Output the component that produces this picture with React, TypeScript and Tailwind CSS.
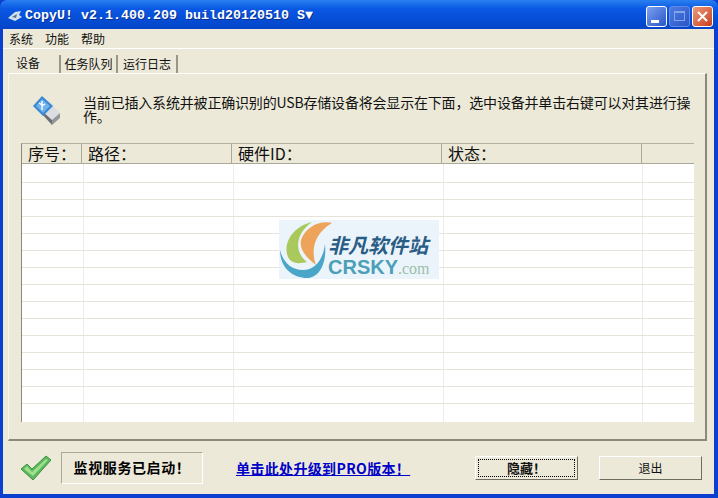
const rows = Array.from({ length: 15 }, (_, i) => i);
const headCols = "grid grid-cols-[60px_150px_210px_200px_1fr]";
const bodyCols = "grid grid-cols-[62px_150px_210px_199px_1fr]";

function Usb() {
  return (
    <svg width="32" height="32" viewBox="0 0 32 32">
      <path d="M10 14 L21 25 L29 18 L18 7 Z" fill="#dcdde0" />
      <path d="M10 15 L10 18 L21 30 L21 25 Z" fill="#6d6f75" />
      <path d="M21 25 L21 30 L29 23 L29 18 Z" fill="#94969c" />
      <path d="M2 11 L11 1 L22 11 L12 21 Z" fill="#3a88d4" />
      <path d="M5 11 L11 4 L19 11 L12 18 Z" fill="#6fb2ec" />
      <path d="M11 6 V15 M11 10 L8 8 M11 11 L14 9" stroke="#fff" strokeWidth="1.4" fill="none" />
    </svg>
  );
}

function Check() {
  return (
    <svg width="32" height="26" viewBox="0 0 32 26">
      <path d="M1 14 L7 9 L12 14 L26 1 L31 5 L13 25 Z" fill="#5cb85a" stroke="#3f8f48" strokeWidth="1" />
      <path d="M4 14 L7 11 L12 17 L26 4 L28 5 L13 21 Z" fill="#9fe08f" />
    </svg>
  );
}

function Logo() {
  return (
    <div className="absolute left-[279px] top-[220px] w-[160px] h-[59px] bg-[#ecf4fb] flex items-center overflow-hidden">
      <svg width="54" height="59" viewBox="0 0 54 59" className="shrink-0">
        <path d="M1 30 C1 48 14 58 28 58 C40 58 48 44 46 24 C44 40 36 50 24 50 C12 50 4 42 1 30 Z" fill="#4aa6c8" />
        <path d="M33 2 C16 6 5 20 8 34 C10 42 16 45 28 42 C15 32 16 14 33 2 Z" fill="#a9c95c" />
        <path d="M53 3 C40 0 26 8 22 20 C20 30 28 38 37 45 C32 32 34 14 53 3 Z" fill="#eda35a" />
      </svg>
      <div className="flex flex-col -ml-[5px] pt-[11px]">
        <span className="text-[20px] leading-[25px] font-bold italic text-[#2a5d86] whitespace-nowrap font-['Noto_Sans_CJK_SC',sans-serif]">非凡软件站</span>
        <span className="leading-[20px] whitespace-nowrap">
          <span className="text-[20px] font-bold text-[#4b9fb8] font-['Liberation_Sans',sans-serif]">CRSKY</span>
          <span className="text-[16px] text-[#9cc0a8] font-['Liberation_Serif',serif]">.com</span>
        </span>
      </div>
    </div>
  );
}

export default function App() {
  return (
    <div className="relative w-[718px] h-[498px] overflow-hidden flex flex-col bg-[#0a3fd0] font-['Noto_Sans_CJK_SC',sans-serif] text-[#111]">
      <div className="h-[29px] shrink-0 flex items-center pt-[3px] pl-[7px] pr-[5px] rounded-t-[7px] bg-gradient-to-b from-[#2a80f0] via-[#0a58e4] via-30% to-[#0344c8]">
        <svg width="16" height="14" viewBox="0 0 16 14" className="mr-[2px]">
          <path d="M1 9 L8 3 L14 2 L12 6 L15 8 L8 12 Z" fill="#cfe0ee" />
          <path d="M5 8 L10 5 L9 9 Z" fill="#56708c" />
        </svg>
        <span className="text-white font-bold text-[13.33px] leading-none font-['Liberation_Mono',monospace] whitespace-nowrap [text-shadow:1px_1px_0_#0a2f90]">CopyU! v2.1.400.209 build20120510 S▼</span>
        <div className="ml-auto flex gap-[2px]">
          <div className="w-[21px] h-[21px] rounded-[3px] border border-white bg-gradient-to-br from-[#7c9ff0] to-[#2a55c8] flex items-end pl-[4px] pb-[3px]">
            <div className="w-[8px] h-[3px] bg-white" />
          </div>
          <div className="w-[21px] h-[21px] rounded-[3px] border border-[#5f8ae8] bg-gradient-to-br from-[#4f7ce0] to-[#2a55c8] flex items-center justify-center">
            <div className="w-[11px] h-[10px] border border-[#84a4ea] border-t-2" />
          </div>
          <div className="w-[21px] h-[21px] rounded-[3px] border border-white bg-gradient-to-br from-[#eb9a7c] to-[#c83c18] flex items-center justify-center">
            <svg width="13" height="13" viewBox="0 0 13 13">
              <path d="M2 2 L11 11 M11 2 L2 11" stroke="#fff" strokeWidth="2" />
            </svg>
          </div>
        </div>
      </div>

      <div className="flex-1 min-h-0 mx-[3px] mb-[4px] mr-[4px] bg-[#ece9d8] flex flex-col">
        <div className="h-[19px] shrink-0 flex items-center gap-[12px] pl-[6px] text-[12px] leading-none border-b border-white box-content">
          <span>系统</span>
          <span>功能</span>
          <span>帮助</span>
        </div>

        <div className="h-[24px] shrink-0 flex items-end pl-[5px] text-[12px] leading-none">
          <div className="w-[51px] h-[24px] flex items-center pl-[8px] pt-[3px] text-[12px]">设备</div>
          <div className="h-[18px] w-[59px] flex items-center justify-center border-r-2 border-l-2 border-l-[#9a9788] border-r-[#9a9788] box-border">任务队列</div>
          <div className="h-[18px] w-[60px] flex items-center justify-center border-r-2 border-r-[#9a9788]">运行日志</div>
        </div>

        <div className="ml-[5px] mr-[7px] h-[368px] shrink-0 border-t border-t-white border-l border-l-[#f7f5ec] border-r-2 border-r-[#8c897c] border-b-2 border-b-[#8c897c] flex flex-col pl-[12px] pr-[12px]">
          <div className="h-[69px] shrink-0 flex pt-[21px]">
            <div className="w-[62px] shrink-0 pl-[10px]">
              <Usb />
            </div>
            <p className="w-[612px] shrink-0 text-[14px] leading-[14px] tracking-[-0.18px] m-0">
              当前已插入系统并被正确识别的USB存储设备将会显示在下面，选中设备并单击右键可以对其进行操作。
            </p>
          </div>
          <div className="h-[279px] w-[673px] border-l border-l-[#8c897c] border-t border-t-[#b5b2a2] bg-white flex flex-col">
            <div className={`${headCols} h-[20px] shrink-0 bg-[#ece9d8] border-b border-[#aca899] text-[16px] leading-[18px]`}>
              <div className="pl-[6px] border-r border-[#aca899]">序号：</div>
              <div className="pl-[6px] border-r border-[#aca899]">路径：</div>
              <div className="pl-[6px] border-r border-[#aca899]">硬件ID：</div>
              <div className="pl-[6px] border-r border-[#aca899]">状态：</div>
              <div />
            </div>
            <div className="flex-1 min-h-0 flex flex-col">
              {rows.map((r) => (
                <div
                  key={r}
                  className={`${bodyCols} ${r === 0 ? "h-[19px]" : r === 14 ? "flex-1" : "h-[17px] border-b border-[#e6e4da]"} ${r === 0 ? "border-b border-[#e6e4da]" : ""} shrink-0`}
                >
                  <div className="border-r border-[#eeece4]" />
                  <div className="border-r border-[#eeece4]" />
                  <div className="border-r border-[#eeece4]" />
                  <div className="border-r border-[#eeece4]" />
                  <div />
                </div>
              ))}
            </div>
          </div>
        </div>

        <div className="flex-1 min-h-0 flex items-center pl-[17px] pr-[12px]">
          <div className="w-[32px] shrink-0 flex"><Check /></div>
          <div className="ml-[9px] w-[142px] h-[32px] shrink-0 border border-t-[#aca899] border-l-[#aca899] border-r-white border-b-white flex items-center justify-center text-[14px] font-bold tracking-[0.6px] text-black">
            监视服务已启动！
          </div>
          <a className="ml-[33px] text-[14px] font-bold text-[#0000c8] underline whitespace-nowrap leading-none tracking-[0.35px]">单击此处升级到PRO版本！</a>
          <button className="ml-auto w-[103px] h-[24px] border border-t-white border-l-white border-r-[#6f6c60] border-b-[#6f6c60] bg-[#ece9d8] p-[2px]">
            <span className="w-full h-full border border-dotted border-black flex items-center justify-center text-[13px] font-bold leading-none">隐藏！</span>
          </button>
          <button className="ml-[21px] w-[103px] h-[24px] border border-t-white border-l-white border-r-[#6f6c60] border-b-[#6f6c60] bg-[#ece9d8] text-[12px] leading-none flex items-center justify-center">
            退出
          </button>
        </div>
      </div>
      <Logo />
    </div>
  );
}
